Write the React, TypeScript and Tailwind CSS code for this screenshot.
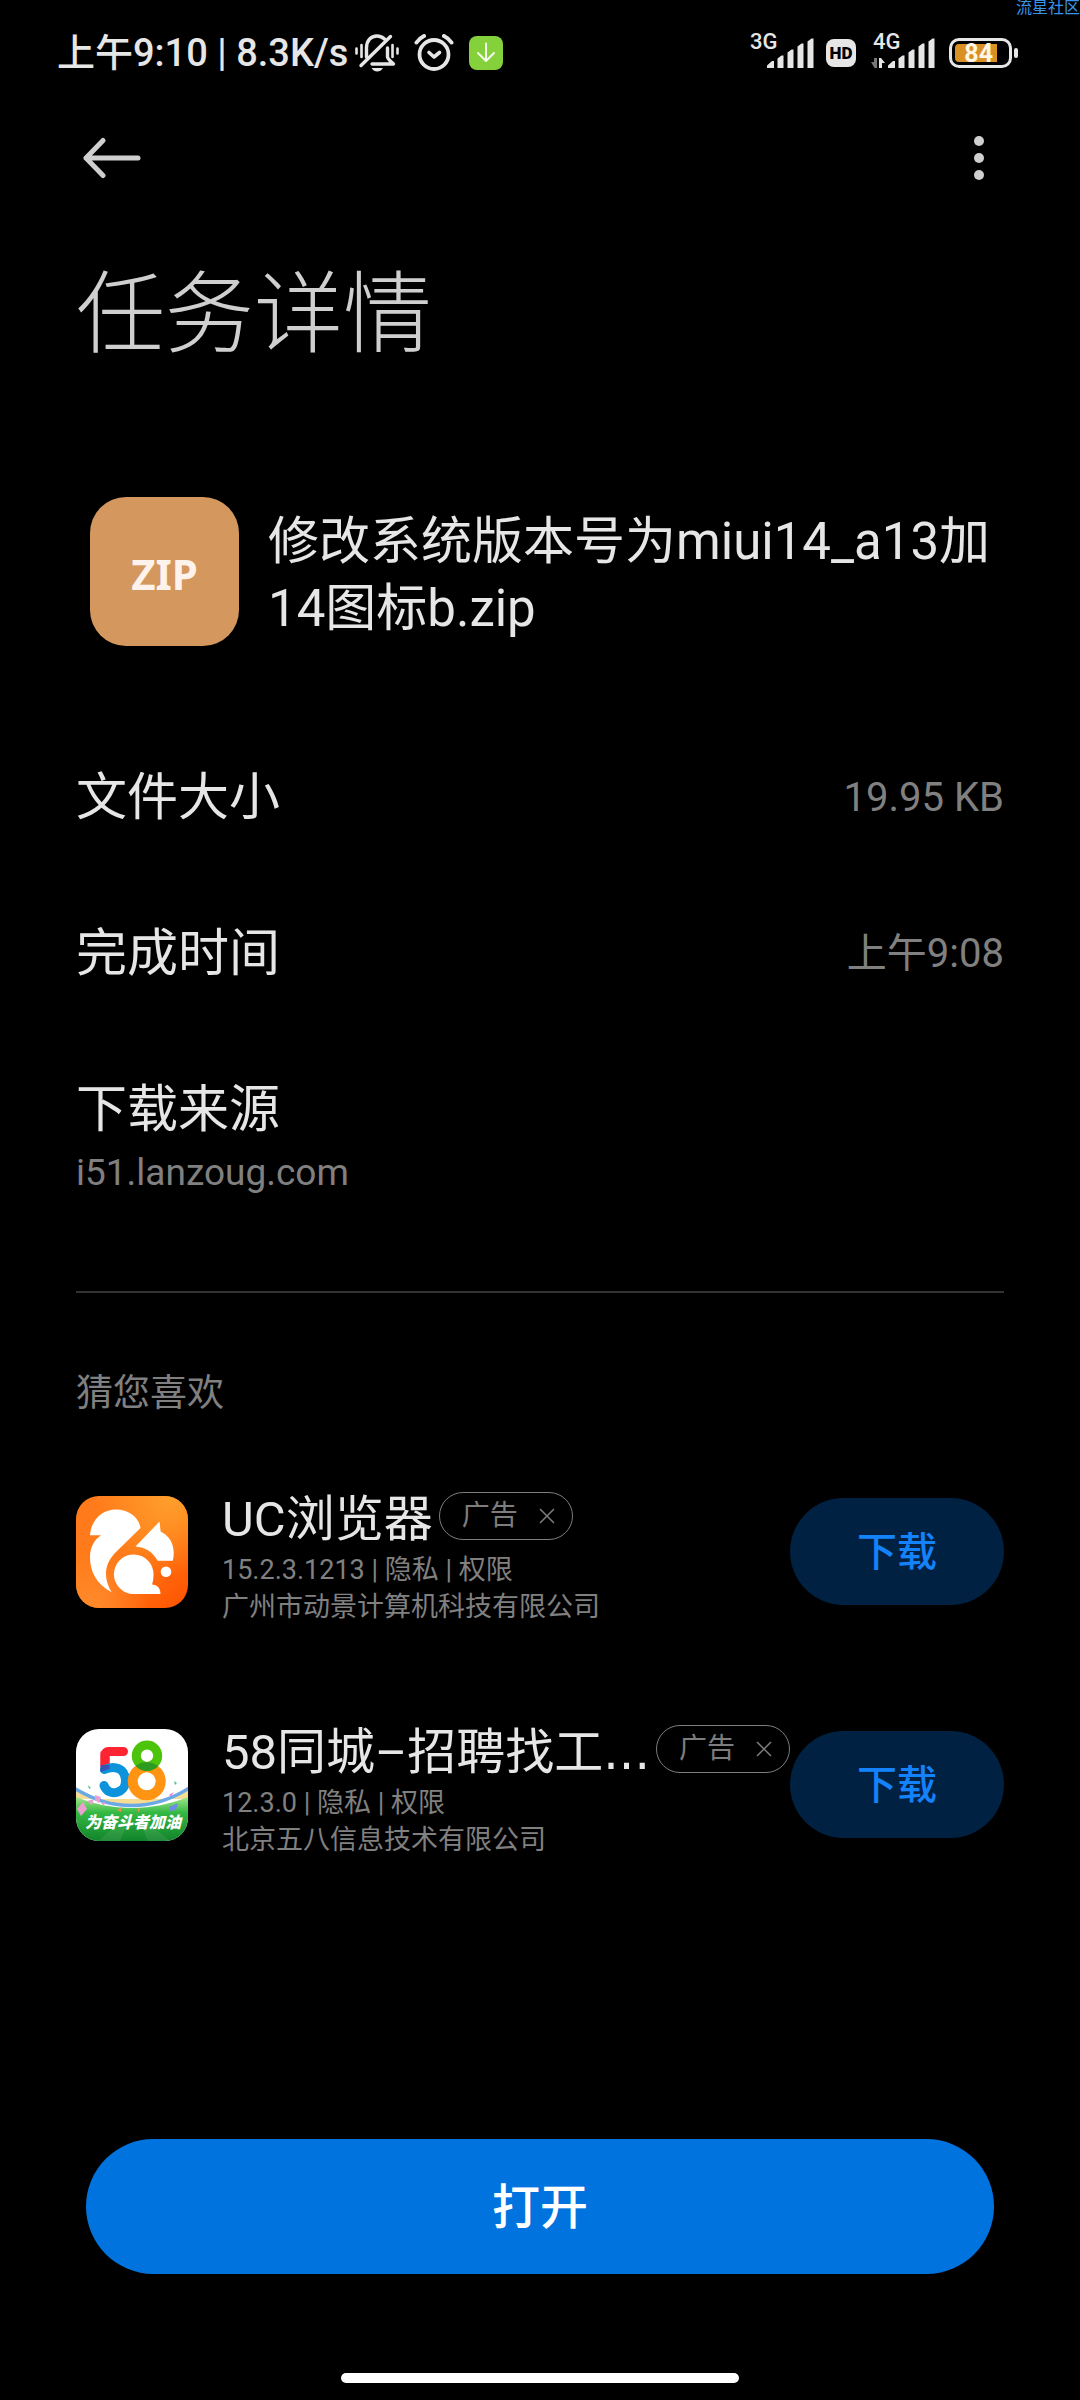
import type { ReactNode } from "react";

function BellOffIcon() {
  return (
    <svg viewBox="0 0 44 38" className="h-[38px] w-[44px]" fill="none" stroke="#e6e6e6" strokeLinecap="round">
      <path d="M1.500 14.500v5M6.500 11v12M42.500 14.500v5M37.500 11v12" strokeWidth="2.600" />
      <path d="M11.500 23V14C11.500 6.500 16 2 22 2c3 0 5.500 1 7.500 3M32.500 14v8.500c0 2.500 2 4 6 7.500H17" strokeWidth="3.400" strokeLinejoin="round" />
      <path d="M35.500 2.500 6 31.500" strokeWidth="3.400" />
      <path d="M16.500 34h11.500c-1.500 2.400-3.500 3.500-5.800 3.500s-4.200-1.100-5.700-3.500z" fill="#e6e6e6" stroke="none" />
    </svg>
  );
}

function AlarmIcon() {
  return (
    <svg viewBox="0 0 40 38" className="h-[38px] w-[40px]" fill="none" stroke="#e6e6e6" strokeLinecap="round" strokeLinejoin="round">
      <circle cx="20" cy="20.500" r="14.500" strokeWidth="3.800" />
      <path d="m15 18.500 5 4.500 5.500-4.500" strokeWidth="3.600" />
      <path d="M2.500 8.500c2-3 4.500-5 7.500-6.500M37.500 8.500c-2-3-4.500-5-7.500-6.500" strokeWidth="4" />
    </svg>
  );
}

function DownloadBadge() {
  return (
    <svg viewBox="0 0 34 34" className="h-[34px] w-[34px]">
      <rect width="34" height="34" rx="8" fill="#84d13c" />
      <path d="M17 7.500v17M9 17l8 8 8-8" fill="none" stroke="#f4fbe9" strokeWidth="2" strokeLinecap="round" strokeLinejoin="round" />
    </svg>
  );
}

function Signal({ label, data }: { label: string; data?: boolean }) {
  return (
    <div className="relative h-[38px] w-[64px]">
      <span className={"absolute -top-1 text-[22px] leading-6 font-medium " + (data ? "left-[2px]" : "left-0")}>{label}</span>
      <svg viewBox="0 0 64 38" className="h-[38px] w-[64px]" fill="#e6e6e6">
        {data && <path d="M6 24v10H3.500L0 28h3v-4z" fill="#777" />}
        {data && <path d="M8 24h2l4 5h-3v5H8z" />}
        <path d="M17 33.500v-2l5-4.500h2v7h-7zM27.500 34V24.500l4-3h2V34zM37.500 34V18.500l4-3h2V34zM47.500 34V12.500l4-3h2V34zM57.500 34V7.500l4-3h2V34z" />
      </svg>
    </div>
  );
}

function Battery() {
  return (
    <div className="flex items-center gap-[2px]">
      <div className="h-[30px] w-[63px] rounded-[10px] border-[3px] border-[#e6e6e6] p-[3px]">
        <div className="flex h-full w-[42px] items-center justify-end rounded-l-sm bg-[#d99125] pr-1 text-[25px] leading-none font-bold text-[#fff6e4]">84</div>
      </div>
      <div className="h-[10px] w-1 rounded-sm bg-[#e6e6e6]" />
    </div>
  );
}

function StatusBar() {
  return (
    <div className="flex h-[106px] items-center justify-between pr-[62px] pl-[57px] text-[#e6e6e6]">
      <div className="flex items-center">
        <span className="text-[38px] leading-[44px] font-medium whitespace-pre">上午9:10 | 8.3K/s</span>
        <div className="ml-[7px] flex items-center gap-[15px]">
          <BellOffIcon />
          <AlarmIcon />
          <DownloadBadge />
        </div>
      </div>
      <div className="flex items-center gap-3">
        <Signal label="3G" />
        <span className="mr-[3px] flex h-[28px] w-[30px] items-center justify-center rounded-lg bg-[#e6e6e6] text-[17px] leading-none font-black text-black">HD</span>
        <div className="flex items-center gap-[14px]">
          <Signal label="4G" data />
          <Battery />
        </div>
      </div>
    </div>
  );
}

function UcLogo() {
  return (
    <svg viewBox="0 0 112 112" className="h-28 w-28 shrink-0">
      <defs>
        <linearGradient id="uc" x1="0" y1="0" x2="1" y2="1">
          <stop offset="0" stopColor="#ff7a1c" />
          <stop offset="0.500" stopColor="#ff7a18" />
          <stop offset="1" stopColor="#ff5200" />
        </linearGradient>
        <radialGradient id="ucTop" cx="0.850" cy="0" r="0.700">
          <stop offset="0" stopColor="#ffa02c" />
          <stop offset="1" stopColor="#ffa02c" stopOpacity="0" />
        </radialGradient>
        <radialGradient id="ucLow" cx="0.150" cy="1" r="0.500">
          <stop offset="0" stopColor="#ff8b2c" />
          <stop offset="1" stopColor="#ff8b2c" stopOpacity="0" />
        </radialGradient>
      </defs>
      <rect width="112" height="112" rx="23" fill="url(#uc)" />
      <rect width="112" height="112" rx="23" fill="url(#ucTop)" />
      <rect width="112" height="112" rx="23" fill="url(#ucLow)" />
      <g fill="#fff">
        <path d="M14 39.300C15 24 26 13.500 40 13.500c13 0 23 8 24.500 18.500L40 56C28 68 27 82 35.700 96.300 20 88 14 75 14 61c0-9 4-17 11-21.700z" />
        <path d="M59.500 50.500 83.500 25.500l1.200 10.300C95 40 100 52 96.800 64.700H81.500C77 56 69 51 59.500 50.500z" />
        <path d="M77.500 78.500A19.800 19.800 0 1 0 57.500 98H84.500c0-6-3.500-9.500-8.500-9.500 1-3 1.500-6 1.500-10z" />
        <circle cx="90" cy="75.700" r="5.300" />
      </g>
    </svg>
  );
}

function Logo58() {
  return (
    <svg viewBox="0 0 112 112" className="h-28 w-28 shrink-0">
      <defs>
        <clipPath id="tile"><rect width="112" height="112" rx="23" /></clipPath>
        <clipPath id="orangeRing"><circle cx="70.700" cy="52.300" r="19" /></clipPath>
        <linearGradient id="grass" x1="0" y1="0" x2="0" y2="1">
          <stop offset="0" stopColor="#a4e68a" />
          <stop offset="0.350" stopColor="#35b944" />
          <stop offset="1" stopColor="#12832b" />
        </linearGradient>
      </defs>
      <g clipPath="url(#tile)">
        <rect width="112" height="112" fill="#fff" />
        <path d="M-2 58C18 72 36 77 56 77s40-5 58-19v12H-2z" fill="#f7dc93" />
        <path d="M-2 59C20 72 36 76.500 56 76.500s38-5 58-18" fill="none" stroke="#6aa8e6" strokeWidth="3.500" />
        <path d="M0 68c18 7 36 11 56 11s38-4 56-11v44H0z" fill="url(#grass)" />
        <path d="m56 84-34 28h22zM60 84l34 28H72z" fill="#fff" opacity="0.080" />
        <path d="m1 80 6-7 4 7-6 7zM11 72l7-2-2 6zM19 66l6 2-2 6-4-3zM25 74l4-1-1 4z" fill="#eba0d0" />
        <path d="m93 66 5-3-3 4z" fill="#e765cf" />
        <path d="m12 56 3 3-2 1zM98 52l3 2-2 2z" fill="#4ec58a" />
        <path d="m93 78 9-4-2 7-6 1z" fill="#6d8be8" />
        <path d="m41 81 5-3-1 5zM61 79l3 1-1 4z" fill="#f08a4c" />
        <g fill="none" strokeWidth="9" strokeLinecap="round">
          <path d="M29 37V22.500" stroke="#ff2432" strokeLinecap="butt" />
          <path d="M47.500 22.500H32.500c-2.300 0-3.500 1.500-3.500 3.500V37" stroke="#ff2432" />
          <path d="M28.500 40.500C38 36 49.500 39 49.500 52c0 12-16.500 17-21.500 4.500" stroke="#0c93dc" />
          <circle cx="70.700" cy="52.300" r="14" stroke="#ff9412" strokeWidth="10" />
          <circle cx="71" cy="26.700" r="10.700" stroke="#4dc40c" />
          <circle cx="71" cy="26.700" r="10.700" stroke="#2f9a20" clipPath="url(#orangeRing)" />
        </g>
        <path d="M24.500 36h9v4l-9 3z" fill="#3a53b4" />
        <text x="57" y="99" textAnchor="middle" fontSize="16" fontWeight="900" fontStyle="italic" fill="#fff">为奋斗者加油</text>
      </g>
    </svg>
  );
}

function AdTag() {
  return (
    <button type="button" aria-label="关闭广告" className="flex h-12 w-[134px] shrink-0 items-center justify-between rounded-full border border-[#7d7d7d] pr-[17px] pl-[22px] text-[#7d7d7d]">
      <span className="text-[28px] leading-9">广告</span>
      <svg viewBox="0 0 16 16" className="h-4 w-4" stroke="currentColor" strokeWidth="1.500">
        <path d="m1 1 14 14M15 1 1 15" />
      </svg>
    </button>
  );
}

function AppRow({ logo, name, version, company, gap }: { logo: ReactNode; name: ReactNode; version: string; company: string; gap: string }) {
  return (
    <li className="flex h-[121px] items-center">
      {logo}
      <div className="ml-[34px] min-w-0 flex-1 pt-[14px]">
        <div className={"flex items-center " + gap}>
          <h3 className="text-[49px] leading-[56px] whitespace-nowrap text-[#e6e6e6]">{name}</h3>
          <div className="self-start"><AdTag /></div>
        </div>
        <p className="mt-1 text-[27px] leading-[37px] whitespace-nowrap">
          {version} | <a href="#privacy">隐私</a> | <a href="#permissions">权限</a>
        </p>
        <p className="text-[27px] leading-[37px] whitespace-nowrap">{company}</p>
      </div>
      <button type="button" className="h-[107px] w-[214px] shrink-0 rounded-full bg-[#002142] pt-[3px] text-[40px] leading-[48px] font-medium text-[#1482fa]">下载</button>
    </li>
  );
}

function InfoRow({ label, value }: { label: string; value: string }) {
  return (
    <div className="flex h-[156px] items-center justify-between">
      <dt className="text-[51px] leading-[60px] text-[#e6e6e6]">{label}</dt>
      <dd className="text-[40px] leading-[48px]">{value}</dd>
    </div>
  );
}

export default function App() {
  return (
    <div className="relative flex min-h-screen flex-col overflow-hidden bg-black font-[Roboto,'Noto_Sans_CJK_SC',sans-serif] text-[#808080]" lang="zh-CN">
      <span className="absolute top-0 right-0 text-[16px] leading-4 whitespace-nowrap text-[#3a94e8]">流星社区</span>
      <StatusBar />

      <header className="px-[76px]">
        <div className="flex h-[104px] items-center justify-between">
          <button type="button" aria-label="返回" className="pl-[6px]">
            <svg viewBox="0 0 60 42" className="h-[42px] w-[60px]" fill="none" stroke="#cfcfcf" strokeWidth="5" strokeLinecap="round" strokeLinejoin="round">
              <path d="M56 21H4M21 3.500 4 21l17 17.500" />
            </svg>
          </button>
          <button type="button" aria-label="更多" className="flex w-[50px] flex-col items-center gap-[7px]">
            <span className="h-[10px] w-[10px] rounded-full bg-[#cfcfcf]" />
            <span className="h-[10px] w-[10px] rounded-full bg-[#cfcfcf]" />
            <span className="h-[10px] w-[10px] rounded-full bg-[#cfcfcf]" />
          </button>
        </div>
        <h1 className="mt-[45px] text-[89px] leading-[120px] font-light text-[#cfcfcf]">任务详情</h1>
      </header>

      <main className="px-[76px] pt-[122px]">
        <section className="flex items-center pl-[14px]">
          <div className="flex h-[149px] w-[149px] shrink-0 items-center justify-center rounded-[36px] bg-[#d4975d] pt-1 font-['Noto_Sans'] text-[42px] leading-none font-bold text-[#fdf3ec]">ZIP</div>
          <h2 className="ml-[29px] pt-[6px] text-[51px] leading-[67px] break-all text-[#e6e6e6]">修改系统版本号为miui14_a13加14图标b.zip</h2>
        </section>

        <dl className="mt-[74px]">
          <InfoRow label="文件大小" value="19.95 KB" />
          <InfoRow label="完成时间" value="上午9:08" />
          <div className="pt-12">
            <dt className="text-[51px] leading-[60px] text-[#e6e6e6]">下载来源</dt>
            <dd className="mt-[9px] text-[37px] leading-[48px]">i51.lanzoug.com</dd>
          </div>
        </dl>

        <hr className="mt-[94px] border-t-2 border-[#333]" />

        <section>
          <h2 className="mt-[77px] text-[37px] leading-[48px]">猜您喜欢</h2>
          <ul className="mt-[73px] flex flex-col gap-[112px]">
            <AppRow logo={<UcLogo />} name="UC浏览器" version="15.2.3.1213" company="广州市动景计算机科技有限公司" gap="gap-[6px]" />
            <AppRow
              logo={<Logo58 />}
              name={<>58同城–招聘找工<span className="font-['DejaVu_Sans']">...</span></>}
              version="12.3.0"
              company="北京五八信息技术有限公司"
              gap="justify-between"
            />
          </ul>
        </section>
      </main>

      <footer className="mt-auto flex flex-col items-center px-[86px] pb-[17px]">
        <button type="button" className="h-[135px] w-full rounded-full bg-[#0073de] pt-[3px] text-[48px] leading-[56px] font-medium text-white">打开</button>
        <div className="mt-[99px] h-[10px] w-[398px] rounded-full bg-white" />
      </footer>
    </div>
  );
}
